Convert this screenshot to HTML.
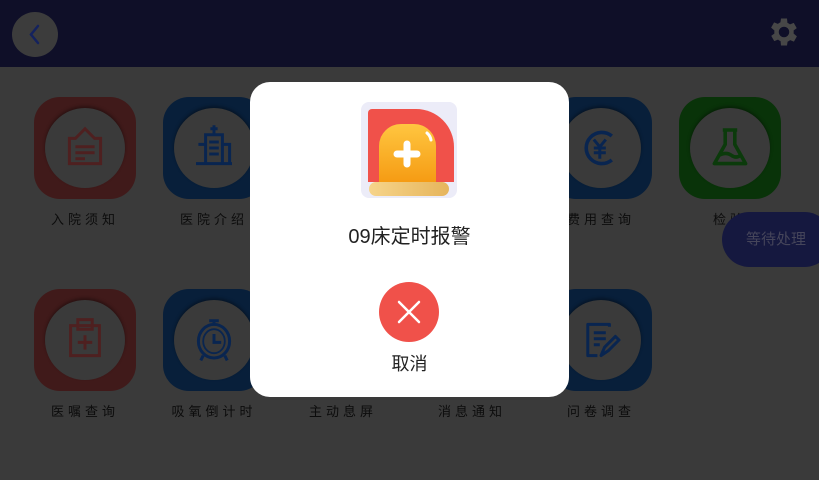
<!DOCTYPE html>
<html><head><meta charset="utf-8"><style>
*{margin:0;padding:0;box-sizing:border-box}
body{width:819px;height:480px;overflow:hidden;background:#3a3a3a;font-family:"Liberation Sans","Noto Sans CJK SC",sans-serif;position:relative}
.hdr{position:absolute;left:0;top:0;width:819px;height:67px;background:#0f0f28}
.back{position:absolute;left:12px;top:12px;width:46px;height:45px;border-radius:50%;background:#3c3c3c}
.tile{position:absolute;width:102px;height:102px;border-radius:26px}
.tile .c{position:absolute;left:11px;top:11px;width:80px;height:80px;border-radius:50%;background:#3a3a3a;box-shadow:0 -2px 3px rgba(0,0,0,.35)}
.tile svg{position:absolute;left:21px;top:21px;width:60px;height:60px}
.lbl{position:absolute;width:130px;text-align:center;font-size:13px;letter-spacing:4px;color:#0c0c0c}
.r{background:#401a1a}.b{background:#081f3a}.g{background:#093309}
.modal{position:absolute;left:250px;top:82px;width:319px;height:315px;background:#fff;border-radius:20px}
.pill{position:absolute;left:722px;top:212px;width:110px;height:55px;border-radius:28px;background:#15183f;color:#45455a;font-size:15px;line-height:55px;padding-left:24px}
</style></head><body>
<div class="hdr"></div>
<div class="back"><svg width="46" height="45"><path d="M26 14 L19 22.5 L26 31" stroke="#14225e" stroke-width="2.5" fill="none" stroke-linecap="round"/></svg></div>
<svg style="position:absolute;left:766px;top:14px" width="36" height="36" viewBox="0 0 24 24"><path fill="#474747" d="M19.4 13a7.5 7.5 0 0 0 0-2l2.1-1.6-2-3.5-2.5 1a7.4 7.4 0 0 0-1.7-1L15 3h-4l-.4 2.6a7.4 7.4 0 0 0-1.7 1l-2.5-1-2 3.5L6.6 11a7.5 7.5 0 0 0 0 2l-2.1 1.6 2 3.5 2.5-1a7.4 7.4 0 0 0 1.7 1L11 21h4l.4-2.6a7.4 7.4 0 0 0 1.7-1l2.5 1 2-3.5zM13 15.5a3.5 3.5 0 1 1 0-7 3.5 3.5 0 0 1 0 7z" transform="translate(-1 0)"/></svg>

<div class="tile r" style="left:34px;top:97px"><div class="c"></div><svg viewBox="0 0 50 50"><path d="M25 9 L17 17 H12 V38 H38 V17 H33 Z M17 24 H33 M17 29 H33 M17 34 H25" stroke="#4e2020" stroke-width="2.5" fill="none"/></svg></div>
<div class="tile b" style="left:163px;top:97px"><div class="c"></div><svg viewBox="0 0 50 50"><path d="M18 14 H32 V38 H18 Z M25 6 V13 M22 9 H28 M12 22 H18 V38 M32 22 H38 V38 M10 38 H40 M21 20 H29 M21 25 H29 M21 30 H29" stroke="#092550" stroke-width="2.5" fill="none"/></svg></div>
<div class="tile b" style="left:550px;top:97px"><div class="c"></div><svg viewBox="0 0 50 50"><path d="M34 15 A13 13 0 1 0 34 35" stroke="#092550" stroke-width="3" fill="none"/><path d="M19 18 L24 24 L29 18 M24 24 V34 M19 25 H29 M19 29 H29" stroke="#092550" stroke-width="2.5" fill="none"/></svg></div>
<div class="tile g" style="left:679px;top:97px"><div class="c"></div><svg viewBox="0 0 50 50"><path d="M19 10 H31 M21 10 V22 L12 38 H38 L29 22 V10 M16 31 Q22 28 26 31 T34 31" stroke="#0b3a0b" stroke-width="3" fill="none" stroke-linejoin="round"/></svg></div>

<div class="lbl" style="left:20px;top:209px">入院须知</div>
<div class="lbl" style="left:149px;top:209px">医院介绍</div>
<div class="lbl" style="left:536px;top:209px">费用查询</div>
<div class="lbl" style="left:665px;top:209px">检验</div>

<div class="tile r" style="left:34px;top:289px"><div class="c"></div><svg viewBox="0 0 50 50"><path d="M13 13 H37 V38 H13 Z M19 8 H31 V16 H19 Z M25 21 V33 M19 27 H31" stroke="#4e2020" stroke-width="2.5" fill="none"/></svg></div>
<div class="tile b" style="left:163px;top:289px"><div class="c"></div><svg viewBox="0 0 50 50"><ellipse cx="25" cy="26" rx="13" ry="14" stroke="#092550" stroke-width="2.5" fill="none"/><ellipse cx="25" cy="26" rx="9" ry="10" stroke="#092550" stroke-width="1.5" fill="none"/><path d="M21 9 H29 M25 9 V12 M25 20 V27 H31 M16 38 L14 42 M34 38 L36 42" stroke="#092550" stroke-width="2.5" fill="none"/></svg></div>
<div class="tile b" style="left:550px;top:289px"><div class="c"></div><svg viewBox="0 0 50 50"><path d="M32 14 V12 H14 V38 H22 M19 19 H29 M19 24 H29 M19 29 H24 M25 38 L28 31 L37 22 L40 25 L31 34 Z" stroke="#092550" stroke-width="2.5" fill="none" stroke-linejoin="round"/></svg></div>

<div class="lbl" style="left:20px;top:401px">医嘱查询</div>
<div class="lbl" style="left:149px;top:401px">吸氧倒计时</div>
<div class="lbl" style="left:278px;top:401px">主动息屏</div>
<div class="lbl" style="left:407px;top:401px">消息通知</div>
<div class="lbl" style="left:536px;top:401px">问卷调查</div>

<div class="pill">等待处理</div>

<div class="modal">
 <svg style="position:absolute;left:111px;top:20px" width="96" height="96" viewBox="0 0 96 96">
  <defs><linearGradient id="y" x1="0" y1="0" x2="0" y2="1"><stop offset="0" stop-color="#ffc640"/><stop offset="1" stop-color="#f59a12"/></linearGradient>
  <linearGradient id="s" x1="0" y1="0" x2="1" y2="0"><stop offset="0" stop-color="#f6d48a"/><stop offset="1" stop-color="#e6b55c"/></linearGradient></defs>
  <rect width="96" height="96" rx="8" fill="#ececf8"/>
  <path d="M7 11 A4 4 0 0 1 11 7 H55 A38 38 0 0 1 93 45 V80 H7 Z" fill="#f0514a"/>
  <path d="M18 82 V44 A22 22 0 0 1 40 22 H53 A22 22 0 0 1 75 44 V82 Z" fill="url(#y)"/>
  <path d="M66 31 A12 12 0 0 1 70 38" stroke="#fff" stroke-width="3" fill="none" stroke-linecap="round"/>
  <path d="M46 42 V62 M36 52 H56" stroke="#fff" stroke-width="7" stroke-linecap="round"/>
  <rect x="8" y="80" width="80" height="14" rx="7" fill="url(#s)"/>
 </svg>
 <div style="position:absolute;left:0;top:138px;width:319px;text-align:center;font-size:20px;color:#222">09床定时报警</div>
 <div style="position:absolute;left:129px;top:200px;width:60px;height:60px;border-radius:50%;background:#f0514a"><svg width="60" height="60"><path d="M20 20 L40 40 M40 20 L20 40" stroke="#fff" stroke-width="2.5" stroke-linecap="round"/></svg></div>
 <div style="position:absolute;left:0;top:268px;width:319px;text-align:center;font-size:18px;color:#222">取消</div>
</div>
</body></html>
